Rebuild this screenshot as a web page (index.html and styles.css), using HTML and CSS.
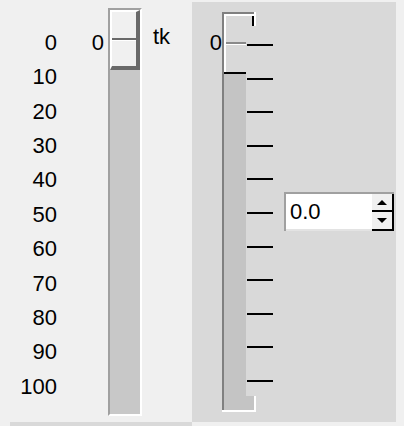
FILE: index.html
```html
<!DOCTYPE html>
<html lang="en">
<head>
  <meta charset="UTF-8">
  <title>tk</title>
  <link rel="stylesheet" href="styles.css">
</head>
<body>
  <div class="window">
    <div class="panel-left">
      <div class="scale-labels">
        <div>0</div>
        <div>10</div>
        <div>20</div>
        <div>30</div>
        <div>40</div>
        <div>50</div>
        <div>60</div>
        <div>70</div>
        <div>80</div>
        <div>90</div>
        <div>100</div>
      </div>
      <div class="value">0</div>
      <div class="trough">
        <div class="handle"><div class="groove"></div></div>
      </div>
      <div class="caption">tk</div>
    </div>

    <div class="panel-right">
      <div class="value value-right">0</div>
      <svg class="scale-v" width="52" height="400" viewBox="0 0 52 400" shape-rendering="crispEdges">
        <!-- sunken frame -->
        <rect x="0" y="0" width="2" height="398" fill="#808080"/>
        <rect x="0" y="0" width="32" height="2" fill="#808080"/>
        <rect x="32" y="0" width="2" height="14" fill="#fff"/>
        <rect x="32" y="384" width="2" height="16" fill="#fff"/>
        <rect x="0" y="398" width="34" height="2" fill="#fff"/>
        <!-- trough -->
        <rect x="2" y="62" width="22" height="336" fill="#c4c4c4"/>
        <rect x="24" y="384" width="8" height="14" fill="#c4c4c4"/>
        <!-- slider -->
        <rect x="2" y="2" width="30" height="2" fill="#fff"/>
        <rect x="2" y="2" width="2" height="58" fill="#fff"/>
        <rect x="30" y="4" width="2" height="10" fill="#000"/>
        <rect x="4" y="30" width="20" height="2" fill="#8a8a8a"/>
        <rect x="4" y="32" width="20" height="1" fill="#fff"/>
        <rect x="2" y="60" width="22" height="2" fill="#000"/>
        <!-- ticks -->
        <g fill="#000">
          <rect x="25" y="32" width="26" height="2"/>
          <rect x="25" y="66" width="26" height="2"/>
          <rect x="25" y="99" width="26" height="2"/>
          <rect x="25" y="133" width="26" height="2"/>
          <rect x="25" y="166" width="26" height="2"/>
          <rect x="25" y="200" width="26" height="2"/>
          <rect x="25" y="234" width="26" height="2"/>
          <rect x="25" y="267" width="26" height="2"/>
          <rect x="25" y="301" width="26" height="2"/>
          <rect x="25" y="334" width="26" height="2"/>
          <rect x="25" y="368" width="26" height="2"/>
        </g>
      </svg>
      <div class="spinbox">
        <div class="spin-text">0.0</div>
        <div class="spin-btns">
          <div class="spin-btn spin-up">
            <svg width="10" height="5" viewBox="0 0 10 5"><polygon points="0,5 10,5 5,0" fill="#000"/></svg>
          </div>
          <div class="spin-btn spin-down">
            <svg width="10" height="5" viewBox="0 0 10 5"><polygon points="0,0 10,0 5,5" fill="#000"/></svg>
          </div>
        </div>
      </div>
    </div>
  </div>
  <div class="strip"></div>
</body>
</html>
```

FILE: styles.css
```css
body {
  margin: 0;
  background: #f0f0f0;
  font-family: "Liberation Sans", sans-serif;
  font-size: 22px;
  color: #000;
}

.window {
  display: flex;
  align-items: flex-start;
}

/* left scale */
.panel-left {
  display: flex;
  align-items: flex-start;
  width: 192px;
  height: 422px;
}

.scale-labels {
  width: 57px;
  margin-top: 25.8px;
  line-height: 34.4px;
  text-align: right;
}

.value {
  width: 47px;
  margin-top: 25.8px;
  line-height: 34.4px;
  text-align: right;
}

.trough {
  width: 30px;
  height: 404px;
  margin-left: 4px;
  margin-top: 8px;
  border: 2px solid;
  border-color: #a0a0a0 #fff #fff #a0a0a0;
  background: #c8c8c8;
}

.handle {
  height: 54px;
  border-style: solid;
  border-width: 2px 4px 4px 2px;
  border-color: #fff #696969 #696969 #fff;
  background: #f0f0f0;
}

.groove {
  height: 2px;
  margin-top: 26px;
  background: #696969;
  border-bottom: 1px solid #fff;
}

.caption {
  margin-left: 11px;
  margin-top: 19.5px;
  line-height: 34.4px;
}

/* right scale */
.panel-right {
  display: flex;
  align-items: flex-start;
  width: 204px;
  height: 420px;
  margin-top: 2px;
  background: #d9d9d9;
}

.value-right {
  width: 30px;
  margin-top: 23.8px;
  line-height: 34.4px;
}

.scale-v {
  display: block;
  margin-top: 10px;
}

.spinbox {
  display: flex;
  width: 110px;
  height: 39px;
  margin-left: 10px;
  margin-top: 190px;
  box-sizing: border-box;
  border-top: 2px solid #a0a0a0;
  border-left: 2px solid #a0a0a0;
  background: #fff;
}

.spin-text {
  flex: 1;
  padding-left: 4px;
  line-height: 35px;
  border-bottom: 2px solid #e3e3e3;
}

.spin-btns {
  display: flex;
  flex-direction: column;
  width: 22px;
}

.spin-btn {
  display: flex;
  align-items: center;
  justify-content: center;
  box-sizing: border-box;
  background: #f0f0f0;
  border-right: 2px solid #000;
  border-bottom: 2px solid #000;
}

.spin-up {
  height: 18px;
}

.spin-down {
  height: 19px;
}

.spin-btn svg {
  display: block;
}

.strip {
  width: 182px;
  height: 4px;
  margin-left: 10px;
  background: #d9d9d9;
}
```
